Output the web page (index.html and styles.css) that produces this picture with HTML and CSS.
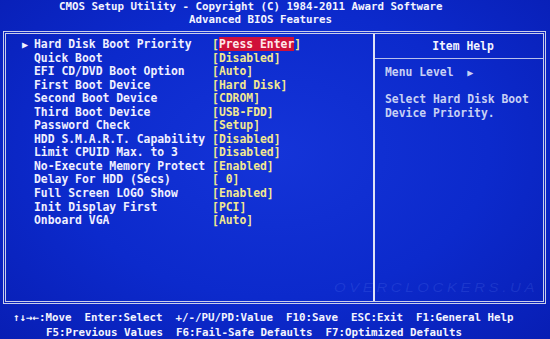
FILE: index.html
```html
<!DOCTYPE html>
<html lang="en">
<head>
  <meta charset="UTF-8">
  <title>Advanced BIOS Features</title>
  <link rel="stylesheet" href="styles.css">
</head>
<body>
  <div class="screen">
    <header class="title">
      <div class="title-line first">CMOS Setup Utility - Copyright (C) 1984-2011 Award Software</div>
      <div class="title-line second">Advanced BIOS Features</div>
    </header>

    <div class="frame">
      <div class="menu">
        <div class="row"><span class="pointer">&#9654;</span><span class="label">Hard Disk Boot Priority</span><span class="value">[<span class="selected">Press Enter</span>]</span></div>
        <div class="row"><span class="pointer"></span><span class="label">Quick Boot</span><span class="value">[Disabled]</span></div>
        <div class="row"><span class="pointer"></span><span class="label">EFI CD/DVD Boot Option</span><span class="value">[Auto]</span></div>
        <div class="row"><span class="pointer"></span><span class="label">First Boot Device</span><span class="value">[Hard Disk]</span></div>
        <div class="row"><span class="pointer"></span><span class="label">Second Boot Device</span><span class="value">[CDROM]</span></div>
        <div class="row"><span class="pointer"></span><span class="label">Third Boot Device</span><span class="value">[USB-FDD]</span></div>
        <div class="row"><span class="pointer"></span><span class="label">Password Check</span><span class="value">[Setup]</span></div>
        <div class="row"><span class="pointer"></span><span class="label">HDD S.M.A.R.T. Capability</span><span class="value">[Disabled]</span></div>
        <div class="row"><span class="pointer"></span><span class="label">Limit CPUID Max. to 3</span><span class="value">[Disabled]</span></div>
        <div class="row"><span class="pointer"></span><span class="label">No-Execute Memory Protect</span><span class="value">[Enabled]</span></div>
        <div class="row"><span class="pointer"></span><span class="label">Delay For HDD (Secs)</span><span class="value">[ 0]</span></div>
        <div class="row"><span class="pointer"></span><span class="label">Full Screen LOGO Show</span><span class="value">[Enabled]</span></div>
        <div class="row"><span class="pointer"></span><span class="label">Init Display First</span><span class="value">[PCI]</span></div>
        <div class="row"><span class="pointer"></span><span class="label">Onboard VGA</span><span class="value">[Auto]</span></div>
      </div>

      <div class="help">
        <div class="help-title">Item Help</div>
        <div class="help-body">
          <div class="help-line">Menu Level  <span class="level-arrow">&#9654;</span></div>
          <div class="help-line"></div>
          <div class="help-line">Select Hard Disk Boot</div>
          <div class="help-line">Device Priority.</div>
        </div>
      </div>

      <div class="watermark">OVERCLOCKERS.UA</div>
    </div>

    <footer class="keys">
      <div class="keys-line first">&#8593;&#8595;&#8594;&#8592;:Move  Enter:Select  +/-/PU/PD:Value  F10:Save  ESC:Exit  F1:General Help</div>
      <div class="keys-line second">F5:Previous Values  F6:Fail-Safe Defaults  F7:Optimized Defaults</div>
    </footer>
  </div>
</body>
</html>
```

FILE: styles.css
```css
html, body {
  margin: 0;
  height: 100%;
}

body {
  background: #0c26c6;
  font-family: 'DejaVu Sans Mono', 'Liberation Mono', monospace;
  font-weight: bold;
  color: #eef0ff;
  overflow: hidden;
}

.screen {
  width: 550px;
  height: 339px;
  overflow: hidden;
  background: radial-gradient(ellipse at 50% 45%, #1434d8 0%, #0c2acc 55%, #081eb4 100%);
}

/* header */
.title {
  font-size: 10.8px;
  color: #f4f4ff;
}

.title-line {
  height: 13px;
  line-height: 13px;
  white-space: pre;
}

.title-line.first {
  padding-left: 59px;
}

.title-line.second {
  padding-left: 189px;
}

/* main frame */
.frame {
  position: relative;
  margin: 5px 4px 0 3px;
  height: 267px;
  border: 3px double #c9cdea;
  display: flex;
}

.menu {
  width: 367px;
  padding-top: 4px;
  font-size: 11.38px;
}

.row {
  display: grid;
  grid-template-columns: 28px 26ch auto;
  height: 13.55px;
  line-height: 13.55px;
  white-space: pre;
}

.pointer {
  padding-left: 16px;
  font-size: 10px;
  color: #f4f4ff;
}

.label {
  color: #f0f0ff;
}

.value {
  color: #f2e890;
}

.selected {
  background: #d0103a;
  color: #ffe8ea;
}

/* item help column */
.help {
  flex: 1;
  border-left: 2px solid #dfe2f6;
  display: flex;
  flex-direction: column;
  font-size: 11.38px;
}

.help-title {
  height: 24px;
  line-height: 24px;
  text-align: center;
  padding-left: 8px;
  color: #f4f4ff;
  border-bottom: 1px solid #b8c0ec;
}

.help-body {
  padding: 7px 0 0 10px;
  color: #c8d0f4;
}

.help-line {
  height: 13.55px;
  line-height: 13.55px;
  white-space: pre;
}

.level-arrow {
  font-size: 10px;
}

.watermark {
  position: absolute;
  right: 5px;
  bottom: 5px;
  font-family: 'Liberation Sans', sans-serif;
  font-style: italic;
  font-weight: normal;
  font-size: 15px;
  letter-spacing: 3.6px;
  color: rgba(120, 150, 255, 0.16);
  transform: scaleY(0.85);
}

/* footer */
.keys {
  margin-top: 6px;
  font-size: 10.8px;
  color: #f4f4ff;
}

.keys-line {
  height: 15px;
  line-height: 15px;
  white-space: pre;
}

.keys-line.first {
  padding-left: 13px;
}

.keys-line.second {
  padding-left: 46px;
}
```
